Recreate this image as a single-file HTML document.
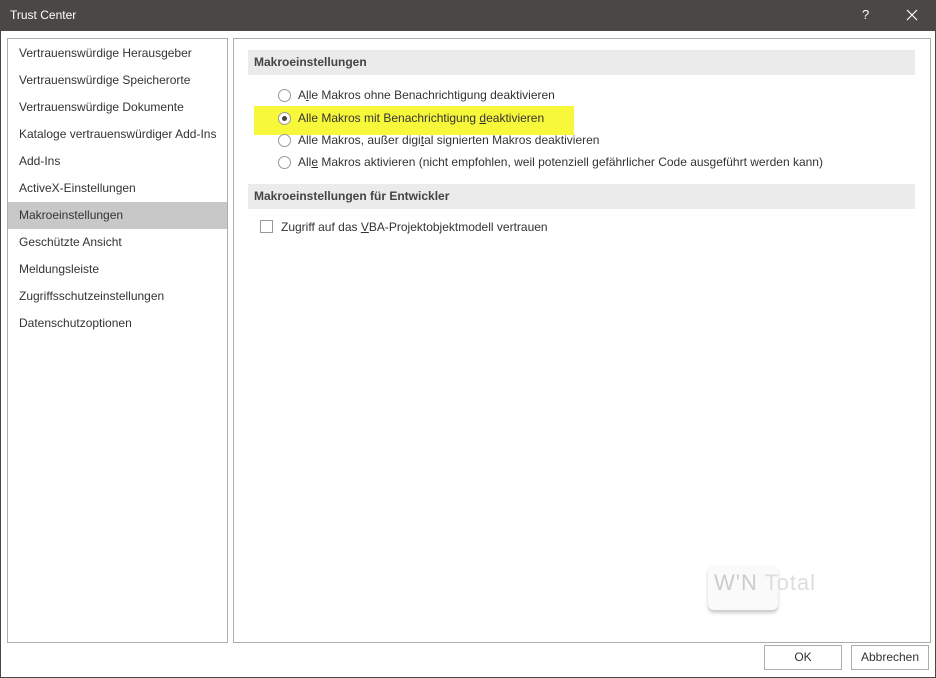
<!DOCTYPE html><html><head><style>
body{margin:0;width:936px;height:678px;background:#fff;font-family:"Liberation Sans",sans-serif;font-size:12px;color:#333;position:relative;overflow:hidden}
.t{position:absolute;left:0;top:0;width:936px;height:31px;background:#4a4846;color:#fff}
.wb{position:absolute;top:31px;width:1px;height:647px;background:#4a4846}
.p{position:absolute;border:1px solid #adadad;background:#fff}
.a{position:absolute;white-space:nowrap}
.li{position:absolute;left:0;width:219px;height:27px;line-height:27px;padding-left:11px;box-sizing:border-box}
.h{position:absolute;left:248px;width:667px;height:25px;background:#ebebeb;line-height:25px;padding-left:6px;box-sizing:border-box;font-weight:bold;color:#444}
.r{position:absolute;left:278px;width:11px;height:11px;border:1px solid #999;border-radius:50%;background:#fff}
.b{position:absolute;top:645px;height:25px;border:1px solid #adadad;box-sizing:border-box;text-align:center;line-height:23px;background:#fff}
</style></head><body>
<div class="t"><span class="a" style="left:10px;top:8px;font-size:12px">Trust Center</span><span class="a" style="left:862px;top:7px;font-size:13px">?</span>
<svg class="a" style="left:906px;top:9px" width="12" height="12"><path d="M1 1L11 11M11 1L1 11" stroke="#fff" stroke-width="1.2"/></svg></div>
<div class="wb" style="left:0"></div><div class="wb" style="left:935px"></div>
<div class="a" style="left:0;top:677px;width:936px;height:1px;background:#4a4846"></div>
<div class="p" style="left:7px;top:38px;width:219px;height:603px">
<div class="li" style="top:1px">Vertrauenswürdige Herausgeber</div>
<div class="li" style="top:28px">Vertrauenswürdige Speicherorte</div>
<div class="li" style="top:55px">Vertrauenswürdige Dokumente</div>
<div class="li" style="top:82px">Kataloge vertrauenswürdiger Add-Ins</div>
<div class="li" style="top:109px">Add-Ins</div>
<div class="li" style="top:136px">ActiveX-Einstellungen</div>
<div class="li" style="top:163px;background:#c8c8c8">Makroeinstellungen</div>
<div class="li" style="top:190px">Geschützte Ansicht</div>
<div class="li" style="top:217px">Meldungsleiste</div>
<div class="li" style="top:244px">Zugriffsschutzeinstellungen</div>
<div class="li" style="top:271px">Datenschutzoptionen</div>
</div>
<div class="p" style="left:233px;top:38px;width:696px;height:603px"></div>
<div class="h" style="top:50px">Makroeinstellungen</div>
<div class="a" style="left:254px;top:106px;width:320px;height:29px;background:#f8f83a"></div>
<div class="r" style="top:89px"></div><div class="a" style="left:298px;top:88px">A<u>l</u>le Makros ohne Benachrichtigung deaktivieren</div>
<div class="r" style="top:112px"></div><div class="a" style="left:282px;top:116px;width:5px;height:5px;border-radius:50%;background:#444"></div><div class="a" style="left:298px;top:111px">Alle Makros mit Benachrichtigung <u>d</u>eaktivieren</div>
<div class="r" style="top:134px"></div><div class="a" style="left:298px;top:133px">Alle Makros, außer digi<u>t</u>al signierten Makros deaktivieren</div>
<div class="r" style="top:156px"></div><div class="a" style="left:298px;top:155px">All<u>e</u> Makros aktivieren (nicht empfohlen, weil potenziell gefährlicher Code ausgeführt werden kann)</div>
<div class="h" style="top:184px">Makroeinstellungen für Entwickler</div>
<div class="a" style="left:260px;top:220px;width:11px;height:11px;border:1px solid #999"></div>
<div class="a" style="left:281px;top:220px">Zugriff auf das <u>V</u>BA-Projektobjektmodell vertrauen</div>
<div class="a" style="left:708px;top:565px;width:70px;height:45px;background:#fafafa;border-radius:6px;box-shadow:0 3px 3px #ccc"></div>
<div class="a" style="left:714px;top:570px;color:#ccc;font-size:22px;letter-spacing:1px">W'N <span style="color:#ddd">Total</span></div>
<div class="b" style="left:764px;width:78px">OK</div>
<div class="b" style="left:851px;width:78px">Abbrechen</div>
</body></html>
